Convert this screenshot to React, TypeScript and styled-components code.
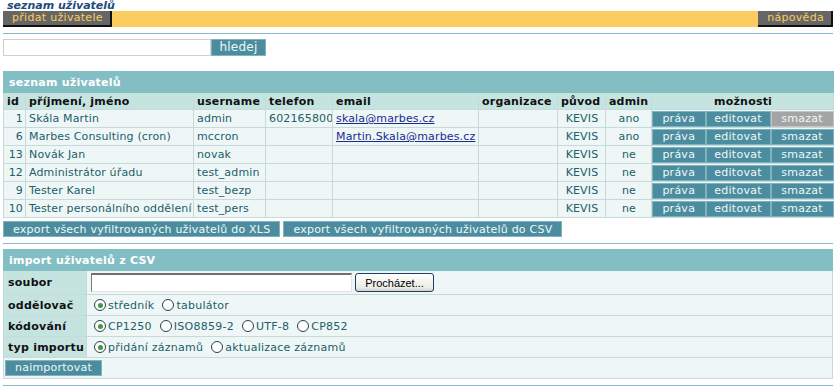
import React from "react";
import styled, { createGlobalStyle } from "styled-components";

const Global = createGlobalStyle`
  html, body { margin: 0; padding: 0; background: #fff; }
  body { font-family: "DejaVu Sans", Verdana, sans-serif; font-size: 10px; color: #215d6c; letter-spacing: 0.15px; }
`;

const Page = styled.div`
  padding: 0 3px;
  width: 830px;
`;

const Title = styled.h1`
  margin: 0 0 0 4px;
  font-size: 11px;
  line-height: 11px;
  font-weight: bold;
  font-style: italic;
  letter-spacing: 0;
  color: #1d4c7c;
`;

const Toolbar = styled.div`
  display: flex;
  justify-content: space-between;
  background: #fbcd5e;
  height: 16px;
`;

const ToolButton = styled.button`
  font-family: inherit;
  font-size: 11px;
  letter-spacing: 0.3px;
  line-height: 14px;
  height: 16px;
  padding: 0 7px 0 9px;
  margin: 0;
  background: #666666;
  color: #fccc5a;
  border: none;
  border-right: 2px solid #111;
  border-bottom: 2px solid #111;
  cursor: pointer;
`;

const Rule = styled.hr<{ $top: number; $bottom: number }>`
  margin: ${(p) => p.$top}px 0 ${(p) => p.$bottom}px;
  border: none;
  border-top: 1px solid #86bcc4;
  height: 0;
`;

const SearchForm = styled.form`
  display: flex;
  margin: 0 0 15px;
`;

const SearchInput = styled.input`
  width: 208px;
  height: 17px;
  box-sizing: border-box;
  border: 1px solid #d0d0d0;
  margin: 0;
  padding: 0 2px;
`;

const TealButton = styled.button<{ $disabled?: boolean }>`
  font-family: inherit;
  font-size: 11px;
  letter-spacing: 0.25px;
  line-height: 13px;
  height: 16px;
  padding: 0 6px;
  margin: 0;
  box-sizing: border-box;
  background: ${(p) => (p.$disabled ? "#a4a4a4" : "#4b8d9f")};
  color: #eef8f8;
  border: 1px solid ${(p) => (p.$disabled ? "#c4c4c4" : "#7fb3c0")};
  cursor: pointer;
  white-space: nowrap;
`;

const SearchButton = styled(TealButton)`
  height: 17px;
  width: 55px;
  font-size: 12px;
`;

const Table = styled.table`
  border-collapse: collapse;
  table-layout: fixed;
  width: 830px;
  font-size: 11px;
`;

const Caption = styled.th`
  background: #84bec5;
  color: #fff;
  text-align: left;
  font-weight: bold;
  font-size: 11px;
  letter-spacing: 0.25px;
  height: 20px;
  padding: 0 5px;
  border: 1px solid #84bec5;
`;

const HeadCell = styled.th<{ $align?: string }>`
  background: #c5e4e0;
  color: #111;
  font-weight: bold;
  font-size: 11px;
  letter-spacing: 0.2px;
  height: 16px;
  padding: 0 2px 0 3px;
  text-align: ${(p) => p.$align || "left"};
  border: 1px solid #c6d9dc;
  white-space: nowrap;
  overflow: hidden;
`;

const Cell = styled.td<{ $align?: string }>`
  background: #eef7f5;
  height: 17px;
  padding: 0 2px 0 3px;
  text-align: ${(p) => p.$align || "left"};
  border: 1px solid #c6d9dc;
  white-space: nowrap;
  overflow: hidden;
`;

const BtnCell = styled.td`
  background: #eef7f5;
  height: 17px;
  padding: 0;
  border: 1px solid #c6d9dc;
  border-left: none;
  border-right: none;
`;

const CellButton = styled(TealButton)`
  width: 100%;
  height: 16px;
  display: block;
  padding: 0;
`;

const Mail = styled.a`
  color: #1a2a90;
  text-decoration: underline;
`;

const ExportRow = styled.div`
  display: flex;
  gap: 3px;
  margin-top: 3px;
`;

const ExportButton = styled(TealButton)`
  padding: 0 9px;
  letter-spacing: 0.22px;
`;

const LabelCell = styled.th`
  background: #c5e4e0;
  color: #111;
  font-weight: bold;
  font-size: 11px;
  letter-spacing: 0.25px;
  text-align: left;
  padding: 0 4px;
  height: 20px;
  border: 1px solid #c6d9dc;
  white-space: nowrap;
`;

const ValueCell = styled.td`
  background: #eef7f5;
  padding: 0 4px;
  border: 1px solid #c6d9dc;
  height: 20px;
`;

const FileRow = styled.div`
  display: flex;
  align-items: center;
  gap: 3px;
`;

const FileBox = styled.input`
  width: 261px;
  height: 19px;
  box-sizing: border-box;
  border: 1px solid #7a7a7a;
  border-top: 2px solid #6e6e6e;
  border-right-color: #e2e2e2;
  border-bottom-color: #e2e2e2;
  margin: 0;
`;

const BrowseButton = styled.button`
  font-family: "Liberation Sans", Arial, sans-serif;
  font-size: 11px;
  letter-spacing: 0;
  height: 19px;
  width: 79px;
  padding: 0;
  border: 1px solid #1c3c6c;
  border-radius: 3px;
  background: linear-gradient(#ffffff, #ecebe6 80%, #d6d0c5);
  color: #000;
`;

const RadioGroup = styled.div`
  display: flex;
  align-items: center;
  gap: 5px;
`;

const RadioLabel = styled.label`
  display: inline-flex;
  align-items: center;
  gap: 2px;
  color: #215d6c;
  font-size: 11px;
  letter-spacing: 0.25px;
`;

const RadioMark = styled.span<{ $checked?: boolean }>`
  width: 12px;
  height: 12px;
  box-sizing: border-box;
  border: 1px solid #2b3f4c;
  border-radius: 50%;
  background: #fff;
  display: inline-flex;
  align-items: center;
  justify-content: center;
  margin-left: 3px;
  &::after {
    content: "";
    width: 5px;
    height: 5px;
    border-radius: 50%;
    background: ${(p) => (p.$checked ? "#3f9a3a" : "transparent")};
  }
`;

const SubmitCell = styled.td`
  background: #eef7f5;
  border: 1px solid #c6d9dc;
  padding: 1px 1px 2px;
  height: 17px;
`;

type User = {
  id: number;
  name: string;
  username: string;
  phone: string;
  email: string;
  org: string;
  origin: string;
  admin: string;
  canDelete: boolean;
};

const users: User[] = [
  { id: 1, name: "Skála Martin", username: "admin", phone: "602165800", email: "skala@marbes.cz", org: "", origin: "KEVIS", admin: "ano", canDelete: false },
  { id: 6, name: "Marbes Consulting (cron)", username: "mccron", phone: "", email: "Martin.Skala@marbes.cz", org: "", origin: "KEVIS", admin: "ano", canDelete: true },
  { id: 13, name: "Novák Jan", username: "novak", phone: "", email: "", org: "", origin: "KEVIS", admin: "ne", canDelete: true },
  { id: 12, name: "Administrátor úřadu", username: "test_admin", phone: "", email: "", org: "", origin: "KEVIS", admin: "ne", canDelete: true },
  { id: 9, name: "Tester Karel", username: "test_bezp", phone: "", email: "", org: "", origin: "KEVIS", admin: "ne", canDelete: true },
  { id: 10, name: "Tester personálního oddělení", username: "test_pers", phone: "", email: "", org: "", origin: "KEVIS", admin: "ne", canDelete: true },
];

const Radio = ({ checked, children }: { checked?: boolean; children: React.ReactNode }) => (
  <RadioLabel>
    <RadioMark $checked={checked} />
    {children}
  </RadioLabel>
);

export default function App() {
  return (
    <>
      <Global />
      <Page>
        <Title>seznam uživatelů</Title>
        <Toolbar>
          <ToolButton>přidat uživatele</ToolButton>
          <ToolButton>nápověda</ToolButton>
        </Toolbar>
        <Rule $top={6} $bottom={5} />
        <SearchForm>
          <SearchInput />
          <SearchButton type="button">hledej</SearchButton>
        </SearchForm>

        <Table>
          <colgroup>
            <col style={{ width: 22 }} />
            <col style={{ width: 168 }} />
            <col style={{ width: 72 }} />
            <col style={{ width: 67 }} />
            <col style={{ width: 146 }} />
            <col style={{ width: 79 }} />
            <col style={{ width: 48 }} />
            <col style={{ width: 46 }} />
            <col style={{ width: 54 }} />
            <col style={{ width: 65 }} />
            <col style={{ width: 63 }} />
          </colgroup>
          <thead>
            <tr>
              <Caption colSpan={11}>seznam uživatelů</Caption>
            </tr>
            <tr>
              <HeadCell>id</HeadCell>
              <HeadCell>příjmení, jméno</HeadCell>
              <HeadCell>username</HeadCell>
              <HeadCell>telefon</HeadCell>
              <HeadCell>email</HeadCell>
              <HeadCell>organizace</HeadCell>
              <HeadCell>původ</HeadCell>
              <HeadCell>admin</HeadCell>
              <HeadCell colSpan={3} $align="center">možnosti</HeadCell>
            </tr>
          </thead>
          <tbody>
            {users.map((u) => (
              <tr key={u.id}>
                <Cell $align="right">{u.id}</Cell>
                <Cell>{u.name}</Cell>
                <Cell>{u.username}</Cell>
                <Cell>{u.phone}</Cell>
                <Cell>{u.email && <Mail href="#">{u.email}</Mail>}</Cell>
                <Cell>{u.org}</Cell>
                <Cell $align="center">{u.origin}</Cell>
                <Cell $align="center">{u.admin}</Cell>
                <BtnCell>
                  <CellButton type="button">práva</CellButton>
                </BtnCell>
                <BtnCell>
                  <CellButton type="button">editovat</CellButton>
                </BtnCell>
                <BtnCell>
                  <CellButton type="button" $disabled={!u.canDelete}>
                    smazat
                  </CellButton>
                </BtnCell>
              </tr>
            ))}
          </tbody>
        </Table>
        <ExportRow>
          <ExportButton type="button">export všech vyfiltrovaných uživatelů do XLS</ExportButton>
          <ExportButton type="button">export všech vyfiltrovaných uživatelů do CSV</ExportButton>
        </ExportRow>

        <Rule $top={6} $bottom={5} />

        <Table>
          <colgroup>
            <col style={{ width: 83 }} />
            <col />
          </colgroup>
          <thead>
            <tr>
              <Caption colSpan={2}>import uživatelů z CSV</Caption>
            </tr>
          </thead>
          <tbody>
            <tr>
              <LabelCell style={{ height: 23 }}>soubor</LabelCell>
              <ValueCell>
                <FileRow>
                  <FileBox />
                  <BrowseButton type="button">Procházet...</BrowseButton>
                </FileRow>
              </ValueCell>
            </tr>
            <tr>
              <LabelCell>oddělovač</LabelCell>
              <ValueCell>
                <RadioGroup>
                  <Radio checked>středník</Radio>
                  <Radio>tabulátor</Radio>
                </RadioGroup>
              </ValueCell>
            </tr>
            <tr>
              <LabelCell>kódování</LabelCell>
              <ValueCell>
                <RadioGroup>
                  <Radio checked>CP1250</Radio>
                  <Radio>ISO8859-2</Radio>
                  <Radio>UTF-8</Radio>
                  <Radio>CP852</Radio>
                </RadioGroup>
              </ValueCell>
            </tr>
            <tr>
              <LabelCell>typ importu</LabelCell>
              <ValueCell>
                <RadioGroup>
                  <Radio checked>přidání záznamů</Radio>
                  <Radio>aktualizace záznamů</Radio>
                </RadioGroup>
              </ValueCell>
            </tr>
            <tr>
              <SubmitCell colSpan={2}>
                <ExportButton type="button">naimportovat</ExportButton>
              </SubmitCell>
            </tr>
          </tbody>
        </Table>
        <Rule $top={6} $bottom={0} />
      </Page>
    </>
  );
}
